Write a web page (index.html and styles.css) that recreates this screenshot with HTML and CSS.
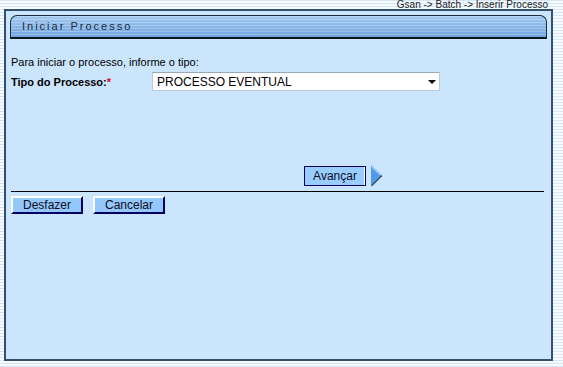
FILE: index.html
```html
<!DOCTYPE html>
<html lang="pt">
<head>
    <meta charset="UTF-8">
    <title>Inserir Processo</title>
    <link rel="stylesheet" href="styles.css">
</head>
<body>
    <div class="breadcrumb">Gsan -&gt; Batch -&gt; Inserir Processo</div>

    <div class="panel">
        <!-- Cabecalho -->
        <div class="title-bar">Iniciar Processo</div>

        <form class="content">
            <p class="intro">Para iniciar o processo, informe o tipo:</p>

            <div class="row">
                <label class="field-label" for="tipo">Tipo do Processo:<span class="required">*</span></label>
                <div class="select-box">
                    <select id="tipo" name="tipo">
                        <option>PROCESSO EVENTUAL</option>
                    </select>
                    <span class="caret"></span>
                </div>
            </div>

            <div class="next">
                <button type="button" class="btn btn-next">Avançar</button>
                <svg class="arrow" width="11" height="21" viewBox="0 0 11 21">
                    <polygon points="0,0 11,10.5 0,21" fill="#4f9be6"/>
                    <polygon points="0,0 11,10.5 9,10.5 1,3" fill="#9fcbf8"/>
                    <line x1="0.5" y1="21" x2="11" y2="10.5" stroke="#2d4660" stroke-width="1.2"/>
                </svg>
            </div>

            <hr class="divider">

            <div class="actions">
                <button type="button" class="btn btn-wide">Desfazer</button>
                <button type="button" class="btn btn-wide">Cancelar</button>
            </div>
        </form>
    </div>
</body>
</html>
```

FILE: styles.css
```css
body {
    margin: 0;
    font-family: "Liberation Sans", Arial, sans-serif;
    font-size: 11px;
    color: #000;
    background-color: #fff;
    background-image: repeating-linear-gradient(to bottom, #d3e7f8 0, #d3e7f8 1px, #f7fbff 1px, #f7fbff 3px);
    height: 367px;
    overflow: hidden;
}
.breadcrumb {
    height: 9px;
    line-height: 9px;
    font-size: 10px;
    text-align: right;
    padding-right: 15px;
    color: #1a1a1a;
}
.panel {
    margin-left: 4px;
    width: 537px;
    height: 344px;
    padding: 4px 4px 0 4px;
    border: 2px solid #33506f;
    background: #cbe5fd;
}
.title-bar {
    height: 21px;
    line-height: 21px;
    padding-left: 11px;
    border: 1px solid #1d2c3e;
    border-bottom: 2px solid #0c1520;
    border-radius: 7px 7px 0 0;
    background-color: #8dbdf0;
    background-image: repeating-linear-gradient(to bottom, rgba(255, 255, 255, 0.18) 0, rgba(255, 255, 255, 0.18) 1px, rgba(0, 0, 0, 0.04) 1px, rgba(0, 0, 0, 0.04) 3px),
                      linear-gradient(to bottom, #a9d0f7, #76abe6);
    font-size: 11px;
    letter-spacing: 2px;
    color: #1b2b3d;
}
.content {
    padding: 0 3px 0 1px;
}
.intro {
    margin: 17px 0 0;
    line-height: 13px;
}
.row {
    display: flex;
    align-items: center;
    margin-top: 3px;
    height: 19px;
}
.field-label {
    width: 141px;
    font-weight: bold;
}
.required {
    color: #e0001a;
}
.select-box {
    position: relative;
    width: 288px;
    height: 19px;
}
.select-box select {
    appearance: none;
    width: 100%;
    height: 19px;
    margin: 0;
    padding: 0 0 0 4px;
    border: 1px solid #b7c9da;
    border-top-color: #9aa9b8;
    background: #fff;
    font-family: "Liberation Sans", Arial, sans-serif;
    font-size: 12px;
    color: #000;
}
.caret {
    position: absolute;
    right: 4px;
    top: 8px;
    border-left: 4px solid transparent;
    border-right: 4px solid transparent;
    border-top: 4px solid #000;
}
.next {
    display: flex;
    align-items: center;
    gap: 5px;
    margin-top: 74px;
    padding-left: 293px;
}
.btn {
    height: 18px;
    padding: 0 8px;
    border: 2px solid;
    border-color: #fff #000060 #000060 #fff;
    background: #94c7fb;
    font-family: "Liberation Sans", Arial, sans-serif;
    font-size: 12px;
    color: #0d0d20;
    cursor: pointer;
}
.btn-next {
    width: 62px;
    height: 20px;
    border: 1px solid #000060;
    box-shadow: inset -1px 0 #fff;
    background: #99ccff;
}
.arrow {
    display: block;
}
.divider {
    margin: 5px 0 0;
    border: 0;
    border-top: 1px solid #000;
    height: 0;
}
.actions {
    display: flex;
    gap: 10px;
    margin-top: 4px;
}
.btn-wide {
    width: 72px;
}
```
